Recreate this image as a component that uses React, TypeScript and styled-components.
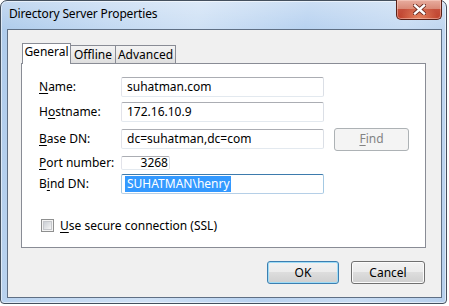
import React from "react";
import styled, { createGlobalStyle } from "styled-components";

const Global = createGlobalStyle`
  html, body { margin: 0; padding: 0; background: #ffffff; }
  body {
    font-family: "Noto Sans", "Open Sans", sans-serif;
    font-size: 12px;
    color: #000000;
  }
  * { box-sizing: border-box; }
`;

const Window = styled.div`
  width: 447px;
  height: 304px;
  border: 1px solid #44505e;
  border-radius: 7px 7px 4px 4px;
  background:
    linear-gradient(180deg, rgba(255, 255, 255, 0.28) 0px, rgba(255, 255, 255, 0) 28px),
    linear-gradient(100deg, #aecbeb 0%, #c3d9f2 22%, #cfe1f5 40%, #b8d2f0 62%, #c8dcf3 82%, #b6cfec 100%);
  box-shadow: inset 0 0 0 1px rgba(255, 255, 255, 0.55);
  display: flex;
  flex-direction: column;
`;

const TitleBar = styled.div`
  height: 28px;
  flex: none;
  display: flex;
  align-items: flex-start;
  justify-content: space-between;
  padding-left: 8px;
`;

const Title = styled.div`
  padding-top: 5px;
  line-height: 16px;
  font-size: 12px;
  letter-spacing: -0.15px;
  color: #000000;
  white-space: nowrap;
`;

const CloseButton = styled.div`
  width: 46px;
  height: 20px;
  margin-top: -1px;
  margin-right: 4px;
  border: 1px solid #5a2118;
  border-top: none;
  border-radius: 0 0 5px 5px;
  background:
    radial-gradient(ellipse at 50% 100%, rgba(240, 150, 110, 0.8) 0%, rgba(240, 150, 110, 0) 60%),
    linear-gradient(180deg, #e8ad9f 0%, #d98a78 45%, #c5503c 50%, #c0432d 100%);
  box-shadow: inset 0 0 0 1px rgba(255, 220, 210, 0.45);
  display: flex;
  align-items: center;
  justify-content: center;
`;

const Client = styled.div`
  flex: 1;
  margin: 0 4px 5px 6px;
  border: 1px solid #5f6f84;
  background: #f0f0f0;
  padding: 13px 15px 0 13px;
  display: flex;
  flex-direction: column;
`;

const TabStrip = styled.div`
  height: 20px;
  display: flex;
  align-items: flex-end;
  padding-left: 1px;
`;

const Tab = styled.div<{ $active?: boolean; $w: number }>`
  position: relative;
  width: ${(p) => p.$w}px;
  margin-left: -1px;
  border: 1px solid #898c95;
  border-bottom: none;
  text-align: center;
  line-height: 16px;
  font-size: 12px;
  white-space: nowrap;
  ${(p) =>
    p.$active
      ? `
    height: 21px;
    margin-bottom: -1px;
    padding-top: 0;
    background: #ffffff;
    z-index: 2;
  `
      : `
    height: 18px;
    padding-top: 1px;
    background: linear-gradient(180deg, #f3f3f3 0%, #ebebeb 50%, #dedede 100%);
    z-index: 1;
  `}
  &:first-child { margin-left: 0; }
`;

const Panel = styled.div`
  height: 185px;
  border: 1px solid #898c95;
  background: #ffffff;
  padding: 13px 0 0 17px;
  display: flex;
  flex-direction: column;
`;

const Row = styled.div<{ $top: number; $h: number }>`
  display: flex;
  align-items: center;
  height: ${(p) => p.$h}px;
  margin-top: ${(p) => p.$top}px;
`;

const Label = styled.div`
  width: 82px;
  flex: none;
  white-space: nowrap;
  line-height: 16px;
`;

const Key = styled.span`
  text-decoration: underline;
  text-underline-offset: 2px;
  text-decoration-thickness: 1px;
`;

const TextBox = styled.div<{ $w: number; $h?: number; $focus?: boolean; $right?: boolean }>`
  width: ${(p) => p.$w}px;
  height: ${(p) => p.$h ?? 20}px;
  border: 1px solid;
  border-radius: 2px;
  border-color: ${(p) =>
    p.$focus ? "#3d7bad #a4c9e3 #b5cfe7 #a4c9e3" : "#abadb3 #dbdfe6 #e3e9ef #e2e3ea"};
  background: #ffffff;
  display: flex;
  align-items: center;
  justify-content: ${(p) => (p.$right ? "flex-end" : "flex-start")};
  padding: ${(p) => (p.$right ? "0 1px 0 0" : p.$focus ? "0 0 0 3px" : "0 0 0 5px")};
  line-height: ${(p) => ((p.$h ?? 20) < 16 ? "12px" : "16px")};
  white-space: nowrap;
`;

const Selection = styled.span`
  background: #3399ff;
  color: #ffffff;
  padding: 0 1px 0 2px;
  line-height: 16px;
`;

const Button = styled.div<{ $w: number; $disabled?: boolean; $default?: boolean }>`
  width: ${(p) => p.$w}px;
  height: 23px;
  flex: none;
  border: 1px solid ${(p) => (p.$disabled ? "#adb2b5" : p.$default ? "#3c7fb1" : "#707070")};
  border-radius: 3px;
  background: ${(p) =>
    p.$disabled
      ? "#f4f4f4"
      : "linear-gradient(180deg, #f2f2f2 0%, #ebebeb 50%, #dddddd 50%, #cfcfcf 100%)"};
  box-shadow: ${(p) =>
    p.$disabled
      ? "none"
      : p.$default
      ? "inset 0 0 0 1px #9fdcf6"
      : "inset 0 0 0 1px #fbfbfb"};
  color: ${(p) => (p.$disabled ? "#838383" : "#000000")};
  display: flex;
  align-items: center;
  justify-content: center;
  line-height: 16px;
  font-size: 12px;
`;

const FindButton = styled(Button)`
  margin-left: 10px;
`;

const CheckRow = styled.div`
  display: flex;
  align-items: center;
  height: 13px;
  margin-top: 25px;
  margin-left: 2px;
  gap: 6px;
  line-height: 16px;
`;

const CheckBox = styled.div`
  width: 13px;
  height: 13px;
  border: 1px solid #8e8f8f;
  background: #f4f4f4;
  padding: 1px;
`;

const CheckInner = styled.div`
  width: 9px;
  height: 9px;
  background: linear-gradient(135deg, #cbcfd5 0%, #dfe1e4 50%, #f6f6f6 100%);
  border: 1px solid #c6c8cc;
`;

const ButtonRow = styled.div`
  display: flex;
  justify-content: flex-end;
  gap: 12px;
  margin-top: 13px;
  padding-right: 1px;
`;

const CloseGlyph = () => (
  <svg width="13" height="11" viewBox="0 0 13 11">
    <path d="M2 1.5 L11 9.5 M11 1.5 L2 9.5" stroke="#6b2a20" strokeWidth="4.2" strokeLinecap="square" />
    <path d="M2 1.5 L11 9.5 M11 1.5 L2 9.5" stroke="#ffffff" strokeWidth="2.4" strokeLinecap="square" />
  </svg>
);

export default function App() {
  return (
    <>
      <Global />
      <Window>
        <TitleBar>
          <Title>Directory Server Properties</Title>
          <CloseButton>
            <CloseGlyph />
          </CloseButton>
        </TitleBar>
        <Client>
          <TabStrip>
            <Tab $active $w={49}>General</Tab>
            <Tab $w={46}>Offline</Tab>
            <Tab $w={61}>Advanced</Tab>
          </TabStrip>
          <Panel>
            <Row $top={0} $h={20}>
              <Label><Key>N</Key>ame:</Label>
              <TextBox $w={203}>suhatman.com</TextBox>
            </Row>
            <Row $top={5} $h={20}>
              <Label>H<Key>o</Key>stname:</Label>
              <TextBox $w={203}>172.16.10.9</TextBox>
            </Row>
            <Row $top={7} $h={20}>
              <Label><Key>B</Key>ase DN:</Label>
              <TextBox $w={203}>dc=suhatman,dc=com</TextBox>
              <FindButton $w={75} $disabled><span><Key>F</Key>ind</span></FindButton>
            </Row>
            <Row $top={7} $h={14}>
              <Label><Key>P</Key>ort number:</Label>
              <TextBox $w={49} $h={14} $right>3268</TextBox>
            </Row>
            <Row $top={4} $h={20}>
              <Label>B<Key>i</Key>nd DN:</Label>
              <TextBox $w={203} $focus>
                <Selection>SUHATMAN\henry</Selection>
              </TextBox>
            </Row>
            <CheckRow>
              <CheckBox>
                <CheckInner />
              </CheckBox>
              <span><Key>U</Key>se secure connection (SSL)</span>
            </CheckRow>
          </Panel>
          <ButtonRow>
            <Button $w={72} $default>OK</Button>
            <Button $w={74}>Cancel</Button>
          </ButtonRow>
        </Client>
      </Window>
    </>
  );
}
